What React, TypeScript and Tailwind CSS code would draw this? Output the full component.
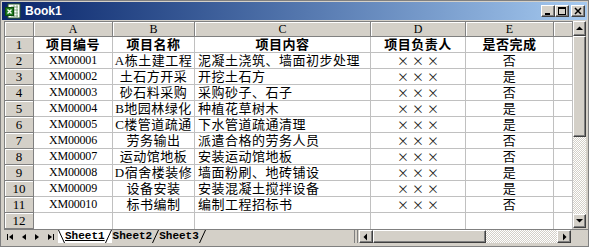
import React from 'react';

const rows = [
  ['XM00001', 'A栋土建工程', '泥凝土浇筑、墙面初步处理', '否'],
  ['XM00002', '土石方开采', '开挖土石方', '是'],
  ['XM00003', '砂石料采购', '采购砂子、石子', '否'],
  ['XM00004', 'B地园林绿化', '种植花草树木', '是'],
  ['XM00005', 'C楼管道疏通', '下水管道疏通清理', '是'],
  ['XM00006', '劳务输出', '派遣合格的劳务人员', '否'],
  ['XM00007', '运动馆地板', '安装运动馆地板', '否'],
  ['XM00008', 'D宿舍楼装修', '墙面粉刷、地砖铺设', '是'],
  ['XM00009', '设备安装', '安装混凝土搅拌设备', '是'],
  ['XM00010', '标书编制', '编制工程招标书', '否'],
];

const cell = 'h-[16px] flex items-center border-r border-b border-[#c0c0c0] bg-white leading-[15px] whitespace-nowrap';
const rowHead =
  'h-[16px] flex items-center justify-center border-r border-b border-[#808080] bg-[#d4d0c8] shadow-[inset_1px_1px_0_#fff] leading-none text-[13px] font-["Liberation_Serif",serif]';
const colHead =
  'h-[15px] flex items-center justify-center border-r border-b border-[#808080] bg-[#d4d0c8] shadow-[inset_1px_1px_0_#fff] leading-none text-[12px] font-["Liberation_Serif",serif]';
const cjk = 'font-["Liberation_Serif","Noto_Sans_CJK_SC",serif] text-[13px] tracking-[0.5px] text-black';
const raised =
  'bg-[#d4d0c8] border border-t-white border-l-white border-r-[#404040] border-b-[#404040] shadow-[inset_-1px_-1px_0_#808080]';
const dotted = 'bg-[repeating-conic-gradient(#d4d0c8_0_25%,#ffffff_0_50%)] bg-[length:2px_2px]';

function ExcelIcon() {
  return (
    <svg width="16" height="16" viewBox="0 0 16 16">
      <rect x="3" y="1" width="12" height="14" fill="#fff" stroke="#2a5a2a" />
      <path d="M6 4h7M6 7h7M6 10h7M6 13h7M9 2v12M12 2v12" stroke="#5a8a5a" strokeWidth="0.7" />
      <rect x="0.5" y="4.5" width="8" height="8" fill="#1f7a1f" stroke="#0d4d0d" />
      <path d="M2.5 6.5l4 4M6.5 6.5l-4 4" stroke="#fff" strokeWidth="1.4" />
    </svg>
  );
}

function TitleButton({ kind }: { kind: 'min' | 'max' | 'close' }) {
  return (
    <div className={`w-[14px] h-[12px] flex items-center justify-center ${raised}`}>
      <svg width="10" height="8" viewBox="0 0 10 8">
        {kind === 'min' && <rect x="2" y="6" width="5" height="2" fill="#000" />}
        {kind === 'max' && (
          <>
            <rect x="1.5" y="0.5" width="7" height="7" fill="none" stroke="#000" />
            <rect x="1" y="0" width="8" height="2" fill="#000" />
          </>
        )}
        {kind === 'close' && <path d="M2 1l6 6M8 1l-6 6" stroke="#000" strokeWidth="1.5" />}
      </svg>
    </div>
  );
}

function Arrow({ dir }: { dir: 'up' | 'down' | 'left' | 'right' }) {
  const d = {
    up: 'M1 5h7L4.5 1.5z',
    down: 'M1 2h7L4.5 5.5z',
    left: 'M5 0.5v7L1.5 4z',
    right: 'M3 0.5v7L6.5 4z',
  }[dir];
  return (
    <svg width="9" height="8" viewBox="0 0 9 8">
      <path d={d} fill="#000" />
    </svg>
  );
}

function NavButtons() {
  return (
    <svg width="54" height="14" viewBox="0 0 54 14">
      <rect x="3" y="4" width="1" height="6" fill="#000" />
      <path d="M9 4v6L5 7z" fill="#000" />
      <path d="M22 4v6L18 7z" fill="#000" />
      <path d="M31 4v6l4-3z" fill="#000" />
      <path d="M44 4v6l4-3z" fill="#000" />
      <rect x="49" y="4" width="1" height="6" fill="#000" />
    </svg>
  );
}

function Slash({ back }: { back?: boolean }) {
  return (
    <svg width="7" height="13" viewBox="0 0 7 13">
      <path d={back ? 'M0.5 0L6.5 13' : 'M6.5 0L0.5 13'} stroke="#000" />
    </svg>
  );
}

export default function App() {
  return (
    <div className="w-[589px] h-[247px] bg-[#d4d0c8] flex flex-col overflow-hidden border border-[#808080]">
      {/* title bar */}
      <div className="mx-[1px] mt-[1px] h-[18px] bg-gradient-to-r from-[#0a246a] to-[#a6caf0] flex items-center pl-[3px] pr-[2px] gap-[4px]">
        <ExcelIcon />
        <span className="text-white font-bold text-[12px] font-['Liberation_Sans',sans-serif] leading-none">Book1</span>
        <div className="ml-auto flex items-center">
          <TitleButton kind="min" />
          <TitleButton kind="max" />
          <div className="w-[2px]" />
          <TitleButton kind="close" />
        </div>
      </div>

      <div className="flex mt-[1px] ml-[3px]">
        {/* sheet grid */}
        <div className="grid grid-cols-[29px_79px_82px_176px_95px_88px_19px] border-l border-t border-[#808080]">
          <div className={colHead}></div>
          {['A', 'B', 'C', 'D', 'E'].map((c) => (
            <div key={c} className={colHead}>
              {c}
            </div>
          ))}
          <div className={colHead}></div>

          <div className={rowHead}>1</div>
          {['项目编号', '项目名称', '项目内容', '项目负责人', '是否完成'].map((h) => (
            <div key={h} className={`${cell} ${cjk} font-bold justify-center`}>
              {h}
            </div>
          ))}
          <div className={cell}></div>

          {rows.map((r, i) => (
            <React.Fragment key={r[0]}>
              <div className={rowHead}>{i + 2}</div>
              <div className={`${cell} justify-center text-[12px] font-['Liberation_Serif',serif] tracking-[-0.2px]`}>{r[0]}</div>
              <div className={`${cell} ${cjk} justify-center`}>{r[1]}</div>
              <div className={`${cell} ${cjk} pl-[3px]`}>{r[2]}</div>
              <div className={`${cell} justify-center font-['Noto_Sans_CJK_SC',sans-serif] text-[12px] tracking-[3px] pl-[3px] text-[#222]`}>×××</div>
              <div className={`${cell} ${cjk} justify-center`}>{r[3]}</div>
              <div className={cell}></div>
            </React.Fragment>
          ))}

          <div className={`${rowHead} h-[15px]`}>12</div>
          {[0, 1, 2, 3, 4, 5].map((k) => (
            <div key={k} className={`${cell} h-[15px] border-b-0`}></div>
          ))}
        </div>

        {/* vertical scrollbar */}
        <div className="w-[13px] h-[207px] flex flex-col">
          <div className={`h-[15px] flex items-center justify-center ${raised}`}>
            <Arrow dir="up" />
          </div>
          <div className={`h-[101px] ${raised}`} />
          <div className={`flex-1 ${dotted}`} />
          <div className={`h-[14px] flex items-center justify-center ${raised}`}>
            <Arrow dir="down" />
          </div>
        </div>
      </div>

      {/* sheet tabs + horizontal scrollbar */}
      <div className="flex ml-[3px] h-[14px] items-stretch border-t border-[#808080]">
        <div className="w-[54px] flex items-center">
          <NavButtons />
        </div>
        <div className="flex items-start font-['Liberation_Mono',monospace] text-[11px] font-bold leading-[12px] text-black">
          <div className="flex items-start bg-white">
            <Slash back />
            <span className="underline">Sheet1</span>
            <Slash />
          </div>
          <span className="ml-[1px]">Sheet2</span>
          <Slash />
          <span>Sheet3</span>
          <Slash />
        </div>
        <div className="flex-1" />
        <div className="flex items-stretch mr-[17px]">
          <div className="w-[4px] border-l border-r border-[#808080] bg-[#d4d0c8] mr-[1px]" />
          <div className={`w-[14px] flex items-center justify-center ${raised}`}>
            <Arrow dir="left" />
          </div>
          <div className={`w-[113px] ${raised}`} />
          <div className={`w-[71px] ${dotted}`} />
          <div className={`w-[14px] flex items-center justify-center ${raised}`}>
            <Arrow dir="right" />
          </div>
        </div>
      </div>
      <div className="flex-1" />
    </div>
  );
}
